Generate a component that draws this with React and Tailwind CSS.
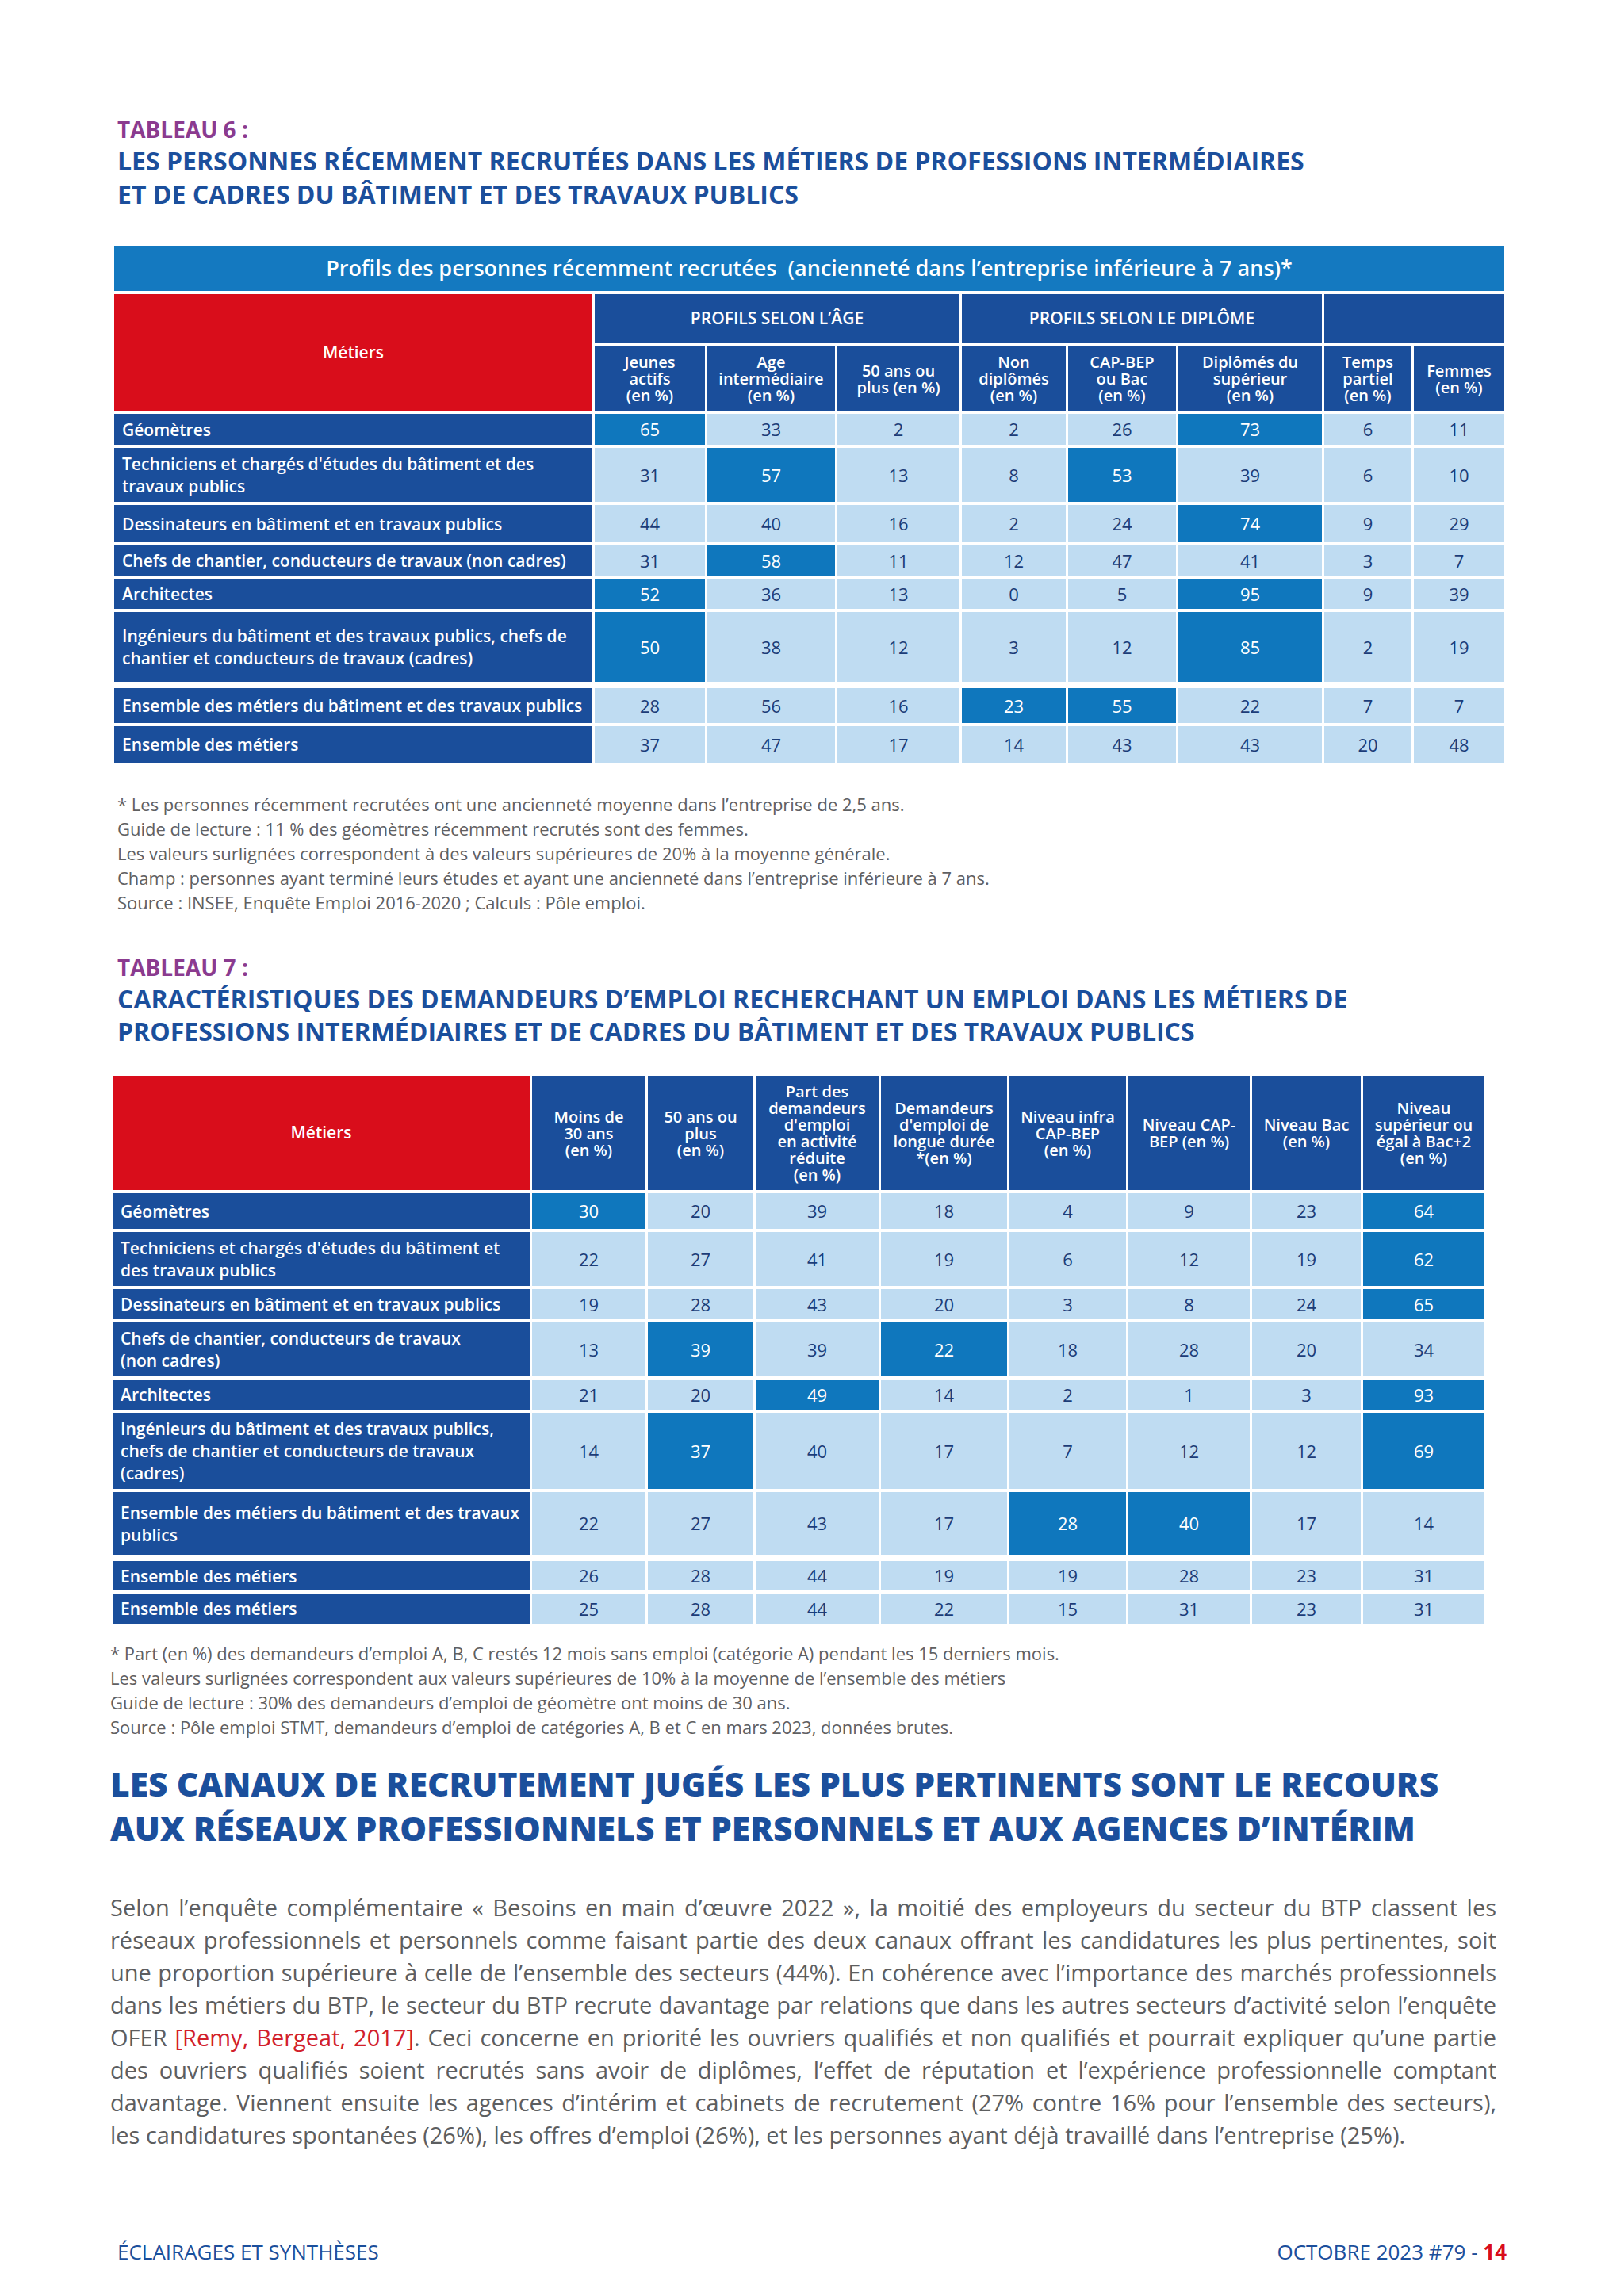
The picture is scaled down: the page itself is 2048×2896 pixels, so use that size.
import React from "react";

const T6_ROWS = [
  { label: ["Géomètres"], values: [65, 33, 2, 2, 26, 73, 6, 11], hi: [0, 5] },
  {
    label: ["Techniciens et chargés d'études du bâtiment et des", "travaux publics"],
    values: [31, 57, 13, 8, 53, 39, 6, 10],
    hi: [1, 4],
  },
  { label: ["Dessinateurs en bâtiment et en travaux publics"], values: [44, 40, 16, 2, 24, 74, 9, 29], hi: [5] },
  { label: ["Chefs de chantier, conducteurs de travaux (non cadres)"], values: [31, 58, 11, 12, 47, 41, 3, 7], hi: [1] },
  { label: ["Architectes"], values: [52, 36, 13, 0, 5, 95, 9, 39], hi: [0, 5] },
  {
    label: ["Ingénieurs du bâtiment et des travaux publics, chefs de", "chantier et conducteurs de travaux (cadres)"],
    values: [50, 38, 12, 3, 12, 85, 2, 19],
    hi: [0, 5],
  },
  { spacer: true },
  { label: ["Ensemble des métiers du bâtiment et des travaux publics"], values: [28, 56, 16, 23, 55, 22, 7, 7], hi: [3, 4] },
  { label: ["Ensemble des métiers"], values: [37, 47, 17, 14, 43, 43, 20, 48], hi: [] },
];

const T6_SUB = [
  ["Jeunes", "actifs", "(en %)"],
  ["Age", "intermédiaire", "(en %)"],
  ["50 ans ou", "plus (en %)"],
  ["Non", "diplômés", "(en %)"],
  ["CAP-BEP", "ou Bac", "(en %)"],
  ["Diplômés du", "supérieur", "(en %)"],
  ["Temps", "partiel", "(en %)"],
  ["Femmes", "(en %)"],
];

const T7_HEAD = [
  ["Moins de", "30 ans", "(en %)"],
  ["50 ans ou", "plus", "(en %)"],
  ["Part des", "demandeurs", "d'emploi", "en activité", "réduite", "(en %)"],
  ["Demandeurs", "d'emploi de", "longue durée", "*(en %)"],
  ["Niveau infra", "CAP-BEP", "(en %)"],
  ["Niveau CAP-", "BEP (en %)"],
  ["Niveau Bac", "(en %)"],
  ["Niveau", "supérieur ou", "égal à Bac+2", "(en %)"],
];

const T7_ROWS = [
  { label: ["Géomètres"], values: [30, 20, 39, 18, 4, 9, 23, 64], hi: [0, 7] },
  {
    label: ["Techniciens et chargés d'études du bâtiment et", "des travaux publics"],
    values: [22, 27, 41, 19, 6, 12, 19, 62],
    hi: [7],
  },
  { label: ["Dessinateurs en bâtiment et en travaux publics"], values: [19, 28, 43, 20, 3, 8, 24, 65], hi: [7] },
  {
    label: ["Chefs de chantier, conducteurs de travaux", "(non cadres)"],
    values: [13, 39, 39, 22, 18, 28, 20, 34],
    hi: [1, 3],
  },
  { label: ["Architectes"], values: [21, 20, 49, 14, 2, 1, 3, 93], hi: [2, 7] },
  {
    label: ["Ingénieurs du bâtiment et des travaux publics,", "chefs de chantier et conducteurs de travaux", "(cadres)"],
    values: [14, 37, 40, 17, 7, 12, 12, 69],
    hi: [1, 7],
  },
  {
    label: ["Ensemble des métiers du bâtiment et des travaux", "publics"],
    values: [22, 27, 43, 17, 28, 40, 17, 14],
    hi: [4, 5],
  },
  { spacer: true },
  { label: ["Ensemble des métiers"], values: [26, 28, 44, 19, 19, 28, 23, 31], hi: [] },
  { label: ["Ensemble des métiers"], values: [25, 28, 44, 22, 15, 31, 23, 31], hi: [] },
];

function Label({ lines }) {
  return (
    <div className="flex flex-col justify-center bg-[#1a4e9b] pl-[10px] text-[21px] font-semibold leading-[28px] text-white">
      {lines.map((l) => (
        <span key={l} className="whitespace-nowrap">
          {l}
        </span>
      ))}
    </div>
  );
}

function Num({ v, hi }) {
  return (
    <div
      className={
        hi
          ? "flex items-center justify-center bg-[#0f77bd] text-[22px] text-white"
          : "flex items-center justify-center bg-[#bfdcf2] text-[22px] text-[#1c3c78]"
      }
    >
      {v}
    </div>
  );
}

function HeadCell({ lines }) {
  return (
    <div className="flex flex-col items-center justify-center bg-[#1a4e9b] text-center text-[20px] font-semibold leading-[21px] text-white">
      {lines.map((l) => (
        <span key={l} className="whitespace-nowrap">
          {l}
        </span>
      ))}
    </div>
  );
}

function Body({ rows, span }) {
  return rows.map((r, i) =>
    r.spacer ? (
      <div key={i} className={span} />
    ) : (
      <React.Fragment key={i}>
        <Label lines={r.label} />
        {r.values.map((v, j) => (
          <Num key={j} v={v} hi={r.hi.includes(j)} />
        ))}
      </React.Fragment>
    )
  );
}

function Tableau6() {
  return (
    <div className="ml-[144px] mt-[44px] grid w-[1753px] grid-cols-[603px_139px_161px_154px_131px_136px_181px_110px_114px] grid-rows-[57px_62px_81px_39px_68px_47px_38px_38px_88px_0px_44px_46px] gap-x-[3px] gap-y-1">
      <div className="col-span-9 flex items-center justify-center whitespace-pre bg-[#1479c0] text-[27px] font-semibold text-white">
        {"Profils des personnes récemment recrutées  (ancienneté dans l’entreprise inférieure à 7 ans)*"}
      </div>
      <div className="row-span-2 flex items-center justify-center bg-[#d90d1b] text-[21px] font-semibold text-white">
        Métiers
      </div>
      <div className="col-span-3 flex items-center justify-center bg-[#1a4e9b] text-[21px] font-semibold text-white">
        PROFILS SELON L’ÂGE
      </div>
      <div className="col-span-3 flex items-center justify-center bg-[#1a4e9b] text-[21px] font-semibold text-white">
        PROFILS SELON LE DIPLÔME
      </div>
      <div className="col-span-2 bg-[#1a4e9b]" />
      {T6_SUB.map((s, i) => (
        <HeadCell key={i} lines={s} />
      ))}
      <Body rows={T6_ROWS} span="col-span-9" />
    </div>
  );
}

function Tableau7() {
  return (
    <div className="ml-[142px] mt-[36px] grid w-[1731px] grid-cols-[526px_143px_133px_155px_159px_147px_153px_137px_153px] grid-rows-[144px_45px_68px_38px_68px_38px_96px_79px_0px_37px_38px] gap-x-[3px] gap-y-1">
      <div className="flex items-center justify-center bg-[#d90d1b] text-[21px] font-semibold text-white">Métiers</div>
      {T7_HEAD.map((s, i) => (
        <HeadCell key={i} lines={s} />
      ))}
      <Body rows={T7_ROWS} span="col-span-9" />
    </div>
  );
}

const BODY_LINES = [
  "Selon l’enquête complémentaire « Besoins en main d’œuvre 2022 », la moitié des employeurs du secteur du BTP classent les",
  "réseaux professionnels et personnels comme faisant partie des deux canaux offrant les candidatures les plus pertinentes, soit",
  "une proportion supérieure à celle de l’ensemble des secteurs (44%). En cohérence avec l’importance des marchés professionnels",
  "dans les métiers du BTP, le secteur du BTP recrute davantage par relations que dans les autres secteurs d’activité selon l’enquête",
  null,
  "des ouvriers qualifiés soient recrutés sans avoir de diplômes, l’effet de réputation et l’expérience professionnelle comptant",
  "davantage. Viennent ensuite les agences d’intérim et cabinets de recrutement (27% contre 16% pour l’ensemble des secteurs),",
];

export default function App() {
  return (
    <div className="min-h-[2896px] w-[2048px] bg-white pt-[147px] font-['Open_Sans','Liberation_Sans',sans-serif]">
      <div className="ml-[148px] text-[28px] font-bold leading-[32px] text-[#8b3b8f]">TABLEAU 6 :</div>
      <h2 className="ml-[148px] mt-[3px] text-[32px] font-bold leading-[42px] text-[#1b4f9c]">
        LES PERSONNES RÉCEMMENT RECRUTÉES DANS LES MÉTIERS DE PROFESSIONS INTERMÉDIAIRES
        <br />
        ET DE CADRES DU BÂTIMENT ET DES TRAVAUX PUBLICS
      </h2>

      <Tableau6 />

      <div className="ml-[148px] mt-[37px] text-[22px] leading-[31px] text-[#5f6062]">
        <p>* Les personnes récemment recrutées ont une ancienneté moyenne dans l’entreprise de 2,5 ans.</p>
        <p>Guide de lecture : 11 % des géomètres récemment recrutés sont des femmes.</p>
        <p>Les valeurs surlignées correspondent à des valeurs supérieures de 20% à la moyenne générale.</p>
        <p>Champ : personnes ayant terminé leurs études et ayant une ancienneté dans l’entreprise inférieure à 7 ans.</p>
        <p>Source : INSEE, Enquête Emploi 2016-2020 ; Calculs : Pôle emploi.</p>
      </div>

      <div className="ml-[148px] mt-[50px] text-[28px] font-bold leading-[32px] text-[#8b3b8f]">TABLEAU 7 :</div>
      <h2 className="ml-[148px] mt-[3px] text-[32px] font-bold leading-[41px] text-[#1b4f9c]">
        CARACTÉRISTIQUES DES DEMANDEURS D’EMPLOI RECHERCHANT UN EMPLOI DANS LES MÉTIERS DE
        <br />
        PROFESSIONS INTERMÉDIAIRES ET DE CADRES DU BÂTIMENT ET DES TRAVAUX PUBLICS
      </h2>

      <Tableau7 />

      <div className="ml-[139px] mt-[22px] text-[22px] leading-[31px] text-[#5f6062]">
        <p>* Part (en %) des demandeurs d’emploi A, B, C restés 12 mois sans emploi (catégorie A) pendant les 15 derniers mois.</p>
        <p>Les valeurs surlignées correspondent aux valeurs supérieures de 10% à la moyenne de l’ensemble des métiers</p>
        <p>Guide de lecture : 30% des demandeurs d’emploi de géomètre ont moins de 30 ans.</p>
        <p>Source : Pôle emploi STMT, demandeurs d’emploi de catégories A, B et C en mars 2023, données brutes.</p>
      </div>

      <h1 className="ml-[139px] mt-[28px] text-[42.5px] font-extrabold leading-[56px] text-[#1b4f9c]">
        LES CANAUX DE RECRUTEMENT JUGÉS LES PLUS PERTINENTS SONT LE RECOURS
        <br />
        AUX RÉSEAUX PROFESSIONNELS ET PERSONNELS ET AUX AGENCES D’INTÉRIM
      </h1>

      <div className="ml-[139px] mt-[51px] w-[1748px] text-[29px] leading-[41px] text-[#5d5e60]">
        {BODY_LINES.map((l, i) =>
          l === null ? (
            <p key={i} className="whitespace-nowrap text-justify [text-align-last:justify]">
              OFER <span className="text-[#d2202b]">[Remy, Bergeat, 2017]</span>. Ceci concerne en priorité les ouvriers
              qualifiés et non qualifiés et pourrait expliquer qu’une partie
            </p>
          ) : (
            <p key={i} className="whitespace-nowrap text-justify [text-align-last:justify]">
              {l}
            </p>
          )
        )}
        <p className="whitespace-nowrap">
          les candidatures spontanées (26%), les offres d’emploi (26%), et les personnes ayant déjà travaillé dans
          l’entreprise (25%).
        </p>
      </div>

      <footer className="ml-[148px] mt-[111px] flex w-[1752px] justify-between text-[26px] leading-[32px] text-[#1b4f9c]">
        <span>ÉCLAIRAGES ET SYNTHÈSES</span>
        <span>
          OCTOBRE 2023 #79 - <span className="font-bold text-[#d90d1b]">14</span>
        </span>
      </footer>
    </div>
  );
}
